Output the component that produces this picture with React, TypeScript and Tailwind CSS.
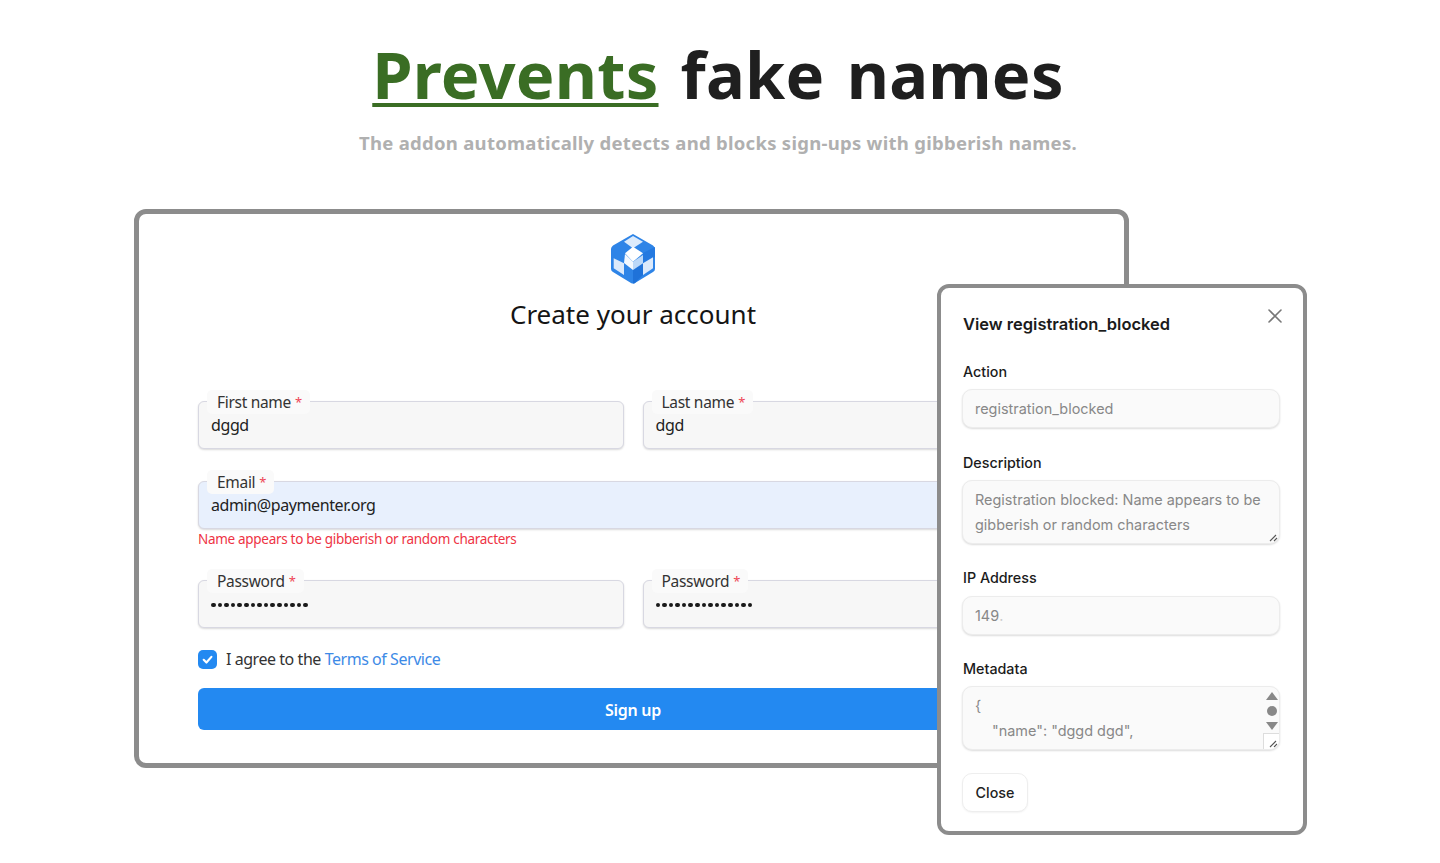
import React from "react";

const seg = { fontFamily: '"Noto Sans", "Open Sans", sans-serif' };
const inter = { fontFamily: 'Inter, "Liberation Sans", sans-serif' };

function Cube() {
  return (
    <svg width="46" height="52" viewBox="0 0 46 52" className="block">
      <path d="M23 1 L43 12.5 Q45 14 45 16 V36 Q45 38 43 39 L25 50 Q23 51 21 50 L3 39 Q1 38 1 36 V16 Q1 14 3 12.5 Z" fill="#2e84e7" />
      <path d="M23 37 L33 30.3 V42 L25 50 Q23 51 23 50 Z" fill="#1f72d9" />
      <path d="M33 20 L45 14 V24 L33 30 Z" fill="#2479e0" />
      <path d="M23 3 L33 8.7 L23 15.3 L14 8.7 Z" fill="#dcebfc" />
      <path d="M23 13.7 L33 20.3 L23 28.7 L15 20.3 Z" fill="#ffffff" />
      <path d="M15 21 L23 28.7 V37 L14 30 Z" fill="#f3f8fe" />
      <path d="M23 28.7 L33 22 V30.3 L23 37 Z" fill="#bcd8f8" />
      <path d="M3.7 25.3 L14 30.3 V42 L3.7 35.3 Z" fill="#dbe9fb" />
      <path d="M33 30.3 L43 24.3 V35.3 L33 42 Z" fill="#dbe9fb" />
    </svg>
  );
}

function Field({ label, value, bg = "bg-[#f7f7f7]", dots = false, className = "" }: { label: string; value: string; bg?: string; dots?: boolean; className?: string }) {
  return (
    <div className={`relative h-[48px] rounded-[6px] border border-[#d8d8e2] shadow-[0_1px_2px_rgba(0,0,0,0.15)] ${bg} ${className}`}>
      <span className="absolute left-[8px] top-[-12px] flex h-[24px] items-center gap-[4px] rounded-[5px] bg-[#fafafa] pl-[10px] pr-[8px] pt-[1px] text-[15.5px] tracking-[-0.3px] text-[#333]">
        {label}
        <span className="text-[13px] text-[#ee4455]">*</span>
      </span>
      <div className="flex h-full items-center pl-[12px] text-[16px] tracking-[-0.4px] text-[#222]">
        {dots ? <span className="mt-[2px] flex gap-[2px]">{Array.from({ length: 15 }).map((_, i) => <i key={i} className="block h-[4.6px] w-[4.6px] rounded-full bg-[#1a1a1a]" />)}</span> : value}
      </div>
    </div>
  );
}

function ReadOnly({ children, className = "" }: { children: React.ReactNode; className?: string }) {
  return (
    <div className={`relative rounded-[10px] border border-[#ececec] bg-[#fafafa] shadow-[0_1px_2px_rgba(0,0,0,0.14)] px-[12px] text-[14.45px] text-[#888] ${className}`}>
      {children}
    </div>
  );
}

function Grip() {
  return (
    <svg width="10" height="10" viewBox="0 0 10 10" className="absolute bottom-[1px] right-[1px]">
      <path d="M2 9 L8 3 M6 9 L9 6" stroke="#555" strokeWidth="1.1" />
    </svg>
  );
}

function Label({ children }: { children: React.ReactNode }) {
  return <div className="mb-[7px] h-[20px] pl-[1px] text-[14.3px] font-medium leading-[20px] text-[#1b1b1b]">{children}</div>;
}

export default function App() {
  return (
    <div className="relative h-[863px] w-[1440px] overflow-hidden bg-white">
      <div className="pr-[4px] pt-[32px] text-center" style={seg}>
        <h1 className="text-[65px] font-bold leading-[84px] tracking-[0.2px] text-[#1f1f1f] [word-spacing:5px]">
          <span className="text-[#3a6d24] underline decoration-[4px] underline-offset-[4px]">Prevents</span> fake names
        </h1>
        <p className="mt-[13px] text-[18.5px] font-bold leading-[28px] tracking-[0.28px] text-[#b0b0b0]">
          The addon automatically detects and blocks sign-ups with gibberish names.
        </p>
      </div>

      <div className="ml-[134px] mt-[52px] h-[559px] w-[995px] rounded-[12px] border-[5px] border-[#8c8c8c] bg-white pl-[59px] pr-[56px] pt-[19px]" style={seg}>
        <div className="flex justify-center"><Cube /></div>
        <h2 className="mt-[9px] text-center text-[26px] leading-[40px] text-[#151515]">Create your account</h2>

        <div className="mt-[67px] grid grid-cols-2 gap-x-[19px]">
          <Field label="First name" value="dggd" />
          <Field label="Last name" value="dgd" />
        </div>

        <Field className="mt-[32px]" label="Email" value="admin@paymenter.org" bg="bg-[#e8f0fd]" />
        <p className="mt-[1px] h-[18px] text-[13.5px] leading-[18px] tracking-[-0.3px] text-[#ee3344]">Name appears to be gibberish or random characters</p>

        <div className="mt-[32px] grid grid-cols-2 gap-x-[19px]">
          <Field label="Password" value="" dots />
          <Field label="Password" value="" dots />
        </div>

        <div className="mt-[21px] flex h-[20px] items-center gap-[9px] text-[16px] tracking-[-0.45px] text-[#333]">
          <span className="flex h-[19px] w-[19px] items-center justify-center rounded-[5px] bg-[#2389f1]">
            <svg width="13" height="13" viewBox="0 0 12 12"><path d="M2.5 6.3 L5 8.8 L9.6 3.6" fill="none" stroke="#fff" strokeWidth="2" strokeLinecap="round" strokeLinejoin="round" /></svg>
          </span>
          <span>I agree to the <span className="text-[#3d8ae6]">Terms of Service</span></span>
        </div>

        <button className="mt-[19px] h-[42px] w-full rounded-[6px] bg-[#2389f1] pt-[1px] text-[16px] font-semibold tracking-[-0.3px] text-white">Sign up</button>
      </div>

      <div className="absolute left-[937px] top-[284px] h-[551px] w-[370px] rounded-[12px] border-[4px] border-[#8c8c8c] bg-white pl-[21px] pr-[23px] pt-[24px]" style={inter}>
        <div className="h-[24px] pl-[1px] text-[16.5px] font-semibold leading-[24px] text-[#1b1b1b]">View registration_blocked</div>
        <svg className="absolute right-[19px] top-[19px]" width="18" height="18" viewBox="0 0 18 18"><path d="M3 3 L15 15 M15 3 L3 15" stroke="#777" strokeWidth="1.6" strokeLinecap="round" /></svg>

        <div className="mt-[26px]"><Label>Action</Label>
          <ReadOnly className="flex h-[39px] items-center">registration_blocked</ReadOnly>
        </div>
        <div className="mt-[25px]"><Label>Description</Label>
          <ReadOnly className="h-[64px] pt-[6px] leading-[25px]">
            Registration blocked: Name appears to be gibberish or random characters
            <Grip />
          </ReadOnly>
        </div>
        <div className="mt-[24px]"><Label>IP Address</Label>
          <ReadOnly className="mt-[8px] flex h-[39px] items-center">149<span className="opacity-40">.</span></ReadOnly>
        </div>
        <div className="mt-[24px]"><Label>Metadata</Label>
          <ReadOnly className="h-[64px] overflow-hidden pt-[6px] leading-[25px]">
            <div>{"{"}</div>
            <div className="pl-[17px]">"name": "dggd dgd",</div>
            <div className="absolute right-[0px] top-[5px] flex h-[38px] w-[14px] flex-col items-center justify-between">
              <svg width="12" height="8" viewBox="0 0 12 8"><path d="M6 0 L12 8 H0 Z" fill="#888" /></svg>
              <i className="block h-[10px] w-[10px] rounded-full bg-[#888]" />
              <svg width="12" height="8" viewBox="0 0 12 8"><path d="M0 0 H12 L6 8 Z" fill="#888" /></svg>
            </div>
            <div className="absolute bottom-0 right-0 h-[16px] w-[16px] border-l border-t border-[#ddd] bg-white"><Grip /></div>
          </ReadOnly>
        </div>
        <button className="mt-[23px] h-[39px] w-[66px] rounded-[10px] border border-[#eeeeee] bg-white text-[14.3px] font-medium text-[#222] shadow-[0_1px_2px_rgba(0,0,0,0.05)]">Close</button>
      </div>
    </div>
  );
}
